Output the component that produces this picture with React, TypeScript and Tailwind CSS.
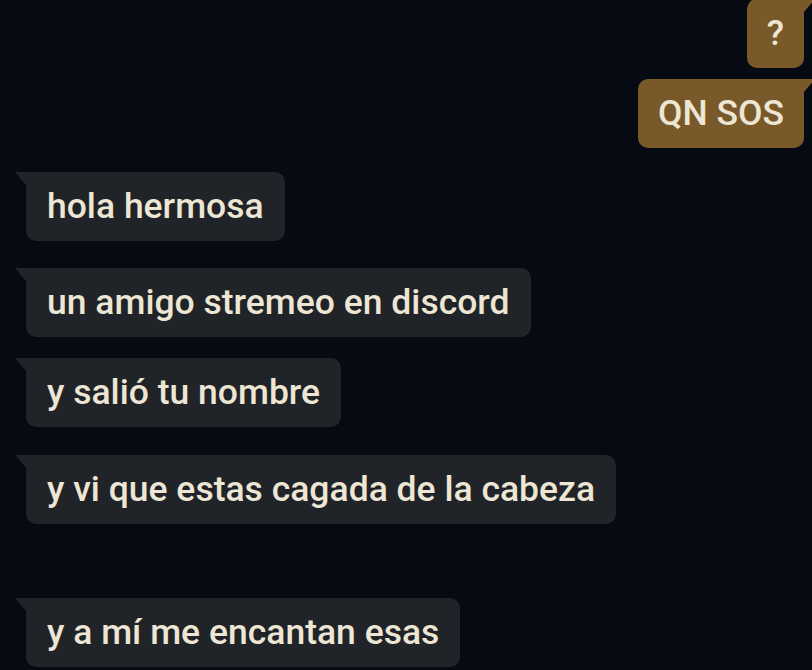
const messages = [
  { text: "?", mine: true, mt: "mt-[-1px]" },
  { text: "QN SOS", mine: true, mt: "mt-[11px]" },
  { text: "hola hermosa", mine: false, mt: "mt-[24px]" },
  { text: "un amigo stremeo en discord", mine: false, mt: "mt-[27px]" },
  { text: "y salió tu nombre", mine: false, mt: "mt-[21px]" },
  { text: "y vi que estas cagada de la cabeza", mine: false, mt: "mt-[28px]" },
  { text: "y a mí me encantan esas", mine: false, mt: "mt-[74px]" },
];

function Bubble({ text, mine, mt }: { text: string; mine: boolean; mt: string }) {
  if (mine) {
    return (
      <div className={`relative ${mt} mr-[8px] flex h-[69px] items-center self-end rounded-[10px] rounded-tr-none bg-[#79592a] px-[20px] text-[#ede6d4]`}>
        <svg className="absolute -right-[11px] top-0" width="11" height="13" viewBox="0 0 11 13">
          <path d="M0 0H11L0 13Z" fill="#79592a" />
        </svg>
        {text}
      </div>
    );
  }
  return (
    <div className={`relative ${mt} ml-[26px] flex h-[69px] items-center self-start rounded-[10px] rounded-tl-none bg-[#202327] px-[21px] text-[#ede6d4]`}>
      <svg className="absolute -left-[11px] top-0" width="11" height="13" viewBox="0 0 11 13">
        <path d="M0 0H11V13Z" fill="#202327" />
      </svg>
      {text}
    </div>
  );
}

export default function App() {
  return (
    <div className="flex h-[670px] w-[812px] flex-col overflow-hidden bg-[#050a13] font-['Roboto',sans-serif] text-[35.5px] font-medium leading-none">
      {messages.map((m) => (
        <Bubble key={m.text} {...m} />
      ))}
    </div>
  );
}
